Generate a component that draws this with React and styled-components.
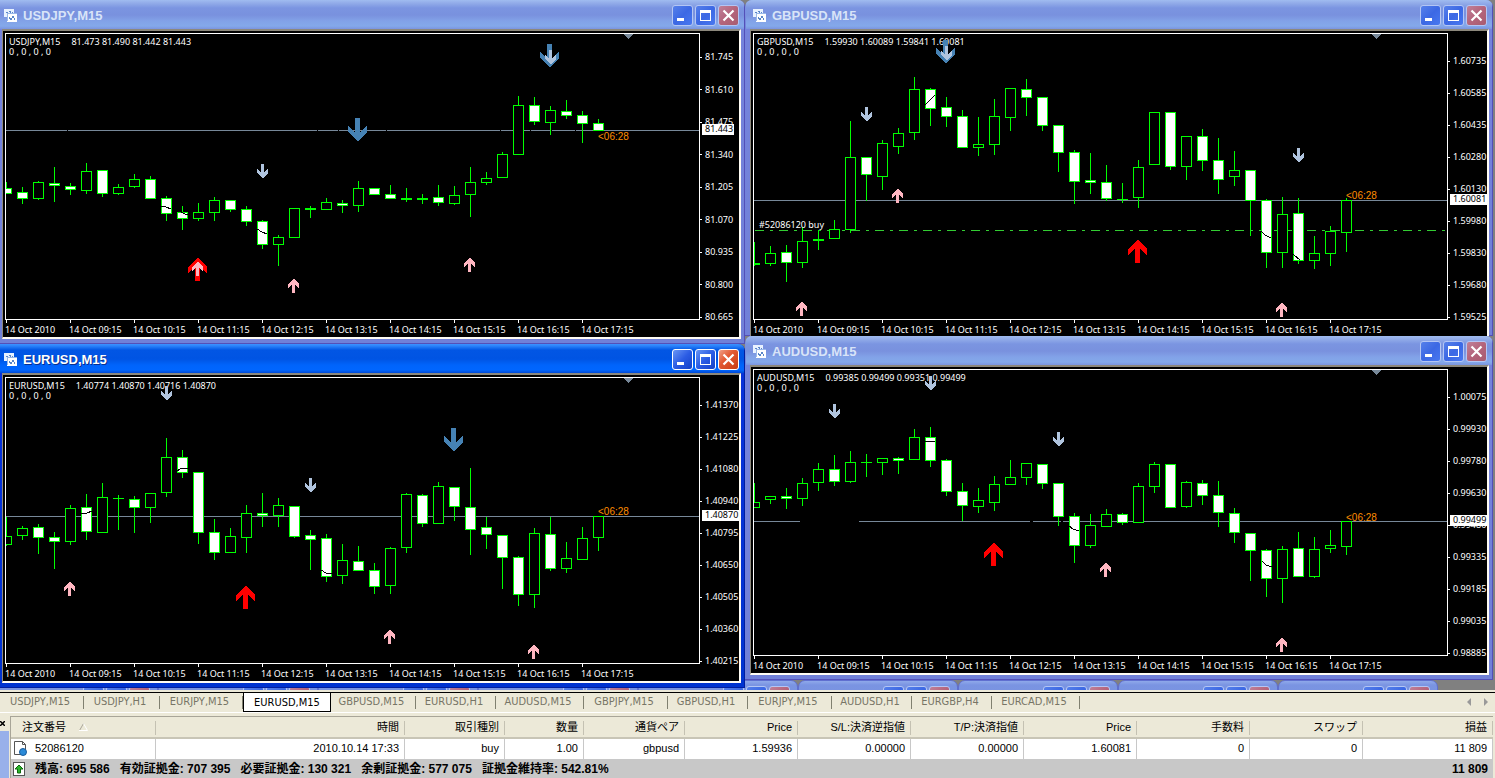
import styled, { createGlobalStyle } from 'styled-components'

const Global = createGlobalStyle`
*{box-sizing:border-box;}
body{
  margin:0;
  background:#ece9d8;
  font-family:"Liberation Sans","Noto Sans CJK JP",sans-serif;
  overflow-x:hidden;
}
button{font:inherit;padding:0;margin:0;}
`

const Desktop = styled.main`
background:#808080;
overflow:hidden;
border-bottom:2px solid #ece9d8;
`
const Windows = styled.div`
position:relative;
z-index:1;
display:grid;
grid-template-columns:minmax(0,745fr) minmax(0,750fr);
align-items:start;
`
const Column = styled.div`
display:flex;
flex-direction:column;
padding-right:${p => p.$right ? '2px' : '0'};
`
const Frame = styled.section`
background:${p => p.$active ? 'linear-gradient(#1a5be6,#0831d9 30px,#0033d0)' : 'linear-gradient(#7d97e2,#7583dc 30px,#7080d8)'};
padding:0 4px ${p => p.$covered ? '0' : '5px'} ${p => p.$right ? '5px' : '2px'};
border-radius:${p => p.$right ? '7px' : '0'} 7px 0 0;
overflow:hidden;
box-shadow:inset -1px -1px 0 ${p => p.$active ? '#001ea0' : '#5350b8'};
`
const TitleBar = styled.header`
height:29px;
margin:0 -3px 0 ${p => p.$right ? '-4px' : '-2px'};
padding:2px 5px 0 ${p => p.$right ? '7px' : '4px'};
display:flex;
align-items:center;
gap:2px;
background:${p => p.$active
    ? 'linear-gradient(#3d92ff 0,#2a82fa 2px,#0256e4 6px,#0054e3 15px,#0064fb 21px,#0066ff 26px,#0048d4 29px)'
    : 'linear-gradient(#a0bcf0 0,#92ace9 3px,#7b95e1 8px,#7991de 15px,#82a2e8 21px,#84a9ea 26px,#7b94e0 29px)'};

h2{
  flex:1;
  margin:0 0 0 3px;
  font-size:13px;
  line-height:18px;
  color:${p => p.$active ? '#ffffff' : '#d8e4f8'};
  text-shadow:${p => p.$active ? '1px 1px 0 #0a2f8c' : 'none'};
}
`
const CaptionButton = styled.button`
width:21px;
height:21px;
flex:none;
display:flex;
border:1px solid ${p => p.$active ? '#ffffff' : '#b4c6f4'};
border-radius:3px;
background:${p => p.$close
    ? (p.$active ? 'linear-gradient(135deg,#f0a088,#e35a34 40%,#c83c14)' : 'linear-gradient(135deg,#c08098,#b4647c 50%,#a85c70)')
    : (p.$active ? 'linear-gradient(135deg,#6a96f4,#2b5ce4 50%,#1440c8)' : 'linear-gradient(135deg,#5680ea,#3c68e4 50%,#4878f0)')};
`
const Client = styled.div`
background:#000;
color:#fff;
padding:2px 0 0 2px;
border-top:2px solid #8c887c;
border-left:1px solid #8c887c;
border-right:2px solid #fffcf4;
border-bottom:${p => p.$covered ? '0' : '2px solid #fffcf4'};
font-family:"Noto Sans","Liberation Sans",sans-serif;
font-size:9px;
line-height:10px;
`
const ChartBody = styled.div`
display:grid;
grid-template-columns:minmax(0,1fr) 39px;
`
const Plot = styled.div`
display:grid;
height:287px;
border:1px solid #fff;

svg{
  grid-area:1/1;
  width:100%;
  height:285px;
}
`
const Legend = styled.p`
grid-area:1/1;
margin:0;
padding:3px;
white-space:pre;

span{margin-right:11px;}
`
const PriceScale = styled.div`
position:relative;
height:287px;
`
const PriceAxis = styled.ol`
list-style:none;
margin:0;
padding:${p => p.$top}px 0 0;
height:289px;
display:flex;
flex-direction:column;
justify-content:space-between;

li{
  display:flex;
  align-items:center;
  gap:3px;
}
li::before{
  content:'';
  width:2px;
  height:1px;
  background:#fff;
}
`
// sits over the scale at the last price
const LastPrice = styled.output`
position:absolute;
left:2px;
top:${p => p.$y}px;
padding:0 1px 0 3px;
height:11px;
background:#fff;
color:#000;
`
const TimeAxis = styled.ol`
list-style:none;
margin:0;
padding:0;
height:${p => p.$covered ? '16px' : '17px'};
display:flex;
overflow:hidden;

li{
  flex:none;
  width:64px;
  white-space:nowrap;
}
li::before{
  content:'';
  display:block;
  width:1px;
  height:3px;
  margin:0 0 2px 1px;
  background:#fff;
}
`
const Dock = styled.div`
display:flex;
height:10px;
margin:-8px 0 0 -2px;
`
const Minimized = styled.div`
flex:none;
width:160px;
height:30px;
padding:5px 7px 0;
display:flex;
justify-content:flex-end;
gap:2px;
border-radius:7px 7px 0 0;
border:1px solid #5f6fd0;
background:linear-gradient(#8fa9ea 0,#7a94e2 4px,#7891de);
`
const TabBar = styled.nav`
display:flex;
height:21px;
border-top:1px solid #000;
border-bottom:1px solid #fff;
background:#ece9d8;
font-family:"DejaVu Sans Condensed","Noto Sans",sans-serif;
font-size:11px;
`
const Tab = styled.button`
flex:none;
width:${p => p.$w}px;
height:${p => p.$on ? '19px' : '17px'};
padding:${p => p.$on ? '0' : '0 4px 0 0'};
border:0;
background:${p => p.$on ? '#fff' : 'linear-gradient(#808070,#808070) right 3px / 1px 13px no-repeat'};
color:${p => p.$on ? '#000' : '#777566'};
box-shadow:${p => p.$on ? 'inset 1px -1px 0 #000,inset -1px 0 0 #000' : 'none'};
`
const Scrollers = styled.div`
margin-left:auto;
padding:5px 3px 0 0;
display:flex;
gap:4px;
`
const ScrollButton = styled.button`
width:13px;
height:9px;
border:0;
background:none;
display:flex;
justify-content:center;
`
const Terminal = styled.section`
display:flex;
padding:3px 2px 0 0;
font-size:11px;
color:#000;
`
const Side = styled.aside`
width:10px;
flex:none;
display:flex;
flex-direction:column;
border-right:1px solid #ece9d8;
background:#98b0ea;
`
const CloseTerminal = styled.button`
height:15px;
border:0;
background:#ece9d8;
padding-right:4px;
display:flex;
align-items:center;
`
const Orders = styled.table`
flex:1;
min-width:0;
table-layout:fixed;
border-collapse:separate;
border-spacing:0;
border-top:1px solid #a8a598;
border-left:1px solid #a8a598;

th,td{
  padding:0 5px;
  text-align:right;
  white-space:nowrap;
  overflow:hidden;
  line-height:16px;
}
th{
  height:22px;
  padding:0 6px;
  font-weight:normal;
  background:linear-gradient(#c4c1b2,#c4c1b2) right 4px / 1px 14px no-repeat,#ece9d8;
  border-bottom:2px solid #c8c5b6;
}
tbody td{
  height:20px;
  padding-bottom:3px;
  background:#fff;
  border-right:1px solid #c8c8c8;
}
tfoot td{
  height:19px;
  background:#c8c8c8;
  font-size:12px;
  font-weight:bold;
}
th:first-child,td:first-child{text-align:left;}
th:first-child{padding-left:11px;}
`
const IconLine = styled.div`
display:flex;
align-items:center;
gap:${p => p.$gap || 8}px;
margin-left:${p => p.$head ? '0' : '-3px'};

svg{flex:none;}
`
const Totals = styled.div`
display:flex;
gap:10px;
`

const GREEN = '#00ff00'
const TIMES = ['14 Oct 2010', '14 Oct 09:15', '14 Oct 10:15', '14 Oct 11:15', '14 Oct 12:15',
  '14 Oct 13:15', '14 Oct 14:15', '14 Oct 15:15', '14 Oct 16:15', '14 Oct 17:15']

// candle: [high, body top, body bottom, low, falling]
const CHARTS = {
  usdjpy: {
    symbol: 'USDJPY,M15',
    quote: '81.473 81.490 81.442 81.443',
    last: '81.443',
    line: 97,
    timerY: 107,
    axisTop: 21,
    prices: ['81.745', '81.610', '81.475', '81.340', '81.205', '81.070', '80.935', '80.800', '80.665'],
    gaps: [[62, 1], [312, 1], [333, 1], [381, 1], [495, 1], [525, 1], [546, 1], [570, 1]],
    average: ['M156 173l5 1 5 2', 'M176 179l4 2h4', 'M252 196l5 3 5 2'],
    arrows: [['light', 257, 131], ['steel', 352, 85], ['red', 192, 225], ['pink', 192, 229],
      ['pink', 288, 246], ['pink', 464, 225], ['steel', 544, 11], ['light', 545, 17]],
    candles: [
      [149, 155, 160, 160, 1], [154, 159, 165, 170, 1], [148, 149, 165, 166, 0], [134, 150, 152, 168, 1],
      [150, 153, 156, 161, 1], [130, 138, 157, 160, 0], [137, 137, 160, 163, 1], [151, 154, 160, 161, 0],
      [141, 146, 153, 154, 0], [143, 146, 165, 165, 1], [163, 165, 180, 187, 1], [173, 179, 185, 196, 1],
      [170, 179, 185, 187, 0], [164, 167, 179, 187, 0], [167, 167, 176, 178, 1], [173, 176, 188, 192, 1],
      [187, 188, 211, 215, 1], [202, 204, 211, 232, 0], [175, 175, 204, 204, 0], [173, 175, 176, 184, 0],
      [165, 169, 176, 176, 0], [167, 170, 172, 179, 1], [148, 155, 172, 178, 0], [155, 155, 161, 161, 1],
      [152, 161, 165, 165, 1], [155, 165, 166, 168, 0], [161, 165, 166, 170, 0], [152, 164, 169, 172, 1],
      [153, 162, 170, 171, 0], [134, 149, 161, 183, 0], [139, 145, 149, 151, 0], [119, 121, 144, 144, 0],
      [63, 72, 121, 121, 0], [64, 72, 88, 91, 1], [73, 77, 89, 101, 0], [67, 78, 82, 85, 1],
      [78, 82, 90, 109, 1], [86, 90, 97, 97, 1],
    ],
  },
  eurusd: {
    symbol: 'EURUSD,M15',
    quote: '1.40774 1.40870 1.40716 1.40870',
    last: '1.40870',
    line: 139,
    timerY: 138,
    axisTop: 25,
    prices: ['1.41370', '1.41225', '1.41080', '1.40940', '1.40795', '1.40650', '1.40505', '1.40360', '1.40215'],
    gaps: [],
    average: ['M76 136h6l5-2', 'M172 94l5-3h6', 'M316 193l5 3 6 1'],
    arrows: [['light', 161, 9], ['light', 305, 101], ['pink', 64, 205], ['red', 240, 209],
      ['steel', 448, 51], ['pink', 384, 253], ['pink', 528, 268]],
    candles: [
      [140, 159, 167, 168, 0], [149, 151, 158, 162, 0], [147, 150, 160, 176, 1], [155, 160, 164, 191, 1],
      [128, 131, 164, 167, 0], [117, 130, 154, 162, 1], [106, 120, 155, 155, 0], [118, 121, 121, 152, 0],
      [119, 122, 130, 155, 1], [116, 116, 130, 145, 0], [61, 80, 115, 119, 0], [73, 80, 95, 100, 1],
      [95, 95, 155, 166, 1], [142, 155, 175, 182, 1], [151, 159, 175, 175, 0], [128, 136, 160, 175, 0],
      [116, 136, 138, 149, 1], [121, 128, 138, 149, 0], [129, 129, 159, 160, 1], [153, 158, 162, 192, 1],
      [157, 161, 199, 204, 1], [167, 183, 198, 206, 0], [169, 184, 193, 193, 1], [186, 193, 209, 216, 1],
      [170, 171, 208, 216, 0], [116, 117, 170, 175, 0], [117, 118, 146, 149, 1], [105, 109, 146, 146, 0],
      [110, 110, 129, 143, 1], [91, 130, 152, 177, 1], [140, 150, 157, 171, 1], [158, 158, 180, 211, 1],
      [179, 180, 217, 228, 1], [151, 156, 217, 230, 0], [140, 157, 191, 193, 1], [165, 181, 191, 195, 0],
      [150, 161, 182, 182, 0], [139, 139, 160, 173, 0],
    ],
  },
  gbpusd: {
    symbol: 'GBPUSD,M15',
    quote: '1.59930 1.60089 1.59841 1.60081',
    last: '1.60081',
    line: 167,
    order: { y: 197, label: '#52086120 buy' },
    timerY: 166,
    axisTop: 25,
    prices: ['1.60735', '1.60585', '1.60435', '1.60280', '1.60130', '1.59980', '1.59830', '1.59680', '1.59525'],
    gaps: [],
    average: ['M172 72l10-10', 'M508 198l4 4 6 3', 'M540 221l7 6'],
    arrows: [['steel', 192, 7], ['light', 193, 13], ['light', 113, 74], ['pink', 144, 156],
      ['pink', 48, 269], ['red', 384, 207], ['light', 545, 115], ['pink', 528, 270]],
    candles: [
      [209, 230, 231, 232, 0], [213, 220, 230, 232, 0], [212, 219, 229, 248, 1], [194, 208, 229, 234, 0],
      [197, 206, 207, 216, 0], [187, 196, 205, 205, 0], [88, 124, 196, 199, 0], [124, 124, 141, 167, 1],
      [107, 110, 143, 156, 0], [95, 100, 113, 120, 0], [44, 56, 99, 106, 0], [55, 56, 75, 92, 1],
      [64, 74, 83, 93, 1], [77, 83, 114, 114, 1], [84, 111, 114, 122, 0], [66, 83, 111, 121, 0],
      [55, 55, 84, 97, 0], [46, 56, 64, 82, 1], [64, 64, 92, 97, 1], [92, 92, 119, 138, 1],
      [117, 119, 148, 170, 1], [120, 147, 149, 160, 1], [132, 149, 165, 167, 1], [150, 166, 166, 169, 0],
      [127, 134, 164, 174, 0], [79, 79, 131, 131, 0], [79, 79, 133, 136, 1], [103, 103, 133, 146, 0],
      [96, 103, 127, 137, 1], [105, 127, 146, 160, 1], [118, 137, 143, 152, 0], [137, 137, 167, 202, 1],
      [166, 167, 219, 234, 1], [164, 181, 219, 234, 0], [165, 180, 227, 230, 1], [203, 220, 227, 235, 0],
      [193, 198, 220, 232, 0], [165, 167, 199, 218, 0],
    ],
  },
  audusd: {
    symbol: 'AUDUSD,M15',
    quote: '0.99385 0.99499 0.99351 0.99499',
    last: '0.99499',
    line: 152,
    timerY: 152,
    axisTop: 25,
    prices: ['1.00075', '0.99930', '0.99780', '0.99630', '0.99480', '0.99335', '0.99185', '0.99035', '0.98885'],
    gaps: [[47, 59], [277, 3], [308, 2]],
    average: ['M172 72h10', 'M316 157l4 3 6 2', 'M509 192l4 4 6 2'],
    arrows: [['light', 81, 35], ['light', 177, 7], ['light', 305, 63], ['red', 240, 174],
      ['pink', 352, 194], ['pink', 528, 269]],
    candles: [
      [114, 133, 138, 138, 0], [127, 127, 130, 134, 0], [119, 127, 129, 139, 1], [109, 114, 129, 136, 0],
      [94, 100, 113, 121, 0], [86, 100, 112, 116, 1], [82, 93, 112, 113, 0], [85, 93, 93, 107, 0],
      [89, 89, 93, 105, 0], [88, 89, 91, 104, 1], [60, 68, 90, 90, 0], [58, 68, 91, 97, 1],
      [90, 91, 122, 126, 1], [114, 122, 136, 151, 1], [119, 131, 137, 143, 0], [107, 115, 133, 141, 0],
      [91, 108, 115, 115, 0], [94, 94, 108, 115, 0], [95, 95, 114, 119, 1], [114, 114, 147, 156, 1],
      [144, 147, 176, 193, 1], [145, 156, 176, 178, 0], [140, 145, 157, 157, 0], [144, 145, 153, 155, 1],
      [114, 117, 153, 153, 0], [93, 95, 117, 123, 0], [95, 95, 138, 138, 1], [112, 113, 137, 138, 0],
      [111, 114, 126, 135, 1], [112, 126, 143, 157, 1], [139, 144, 163, 173, 1], [164, 164, 181, 211, 1],
      [180, 181, 209, 227, 1], [177, 180, 209, 233, 0], [163, 179, 207, 207, 1], [168, 180, 207, 208, 0],
      [161, 176, 179, 183, 0], [152, 152, 177, 185, 0],
    ],
  },
}

const BIG_DOWN = 'M-2 0h5v14l7-6v6L.5 23.5-9 14V8l7 6z'
const BIG_UP = 'M-2 23h5V9l7 6V9L.5-.5-9 9v6l7-6z'
const SMALL_DOWN = 'M-1 0h3v8l4-3v4L.5 14.5-5 9V5l4 3z'
const SMALL_UP = 'M-1 14h3V6l4 3V5L.5-.5-5 5v4l4-3z'

const ARROWS = {
  steel: { d: BIG_DOWN, fill: '#4682b4' },
  red: { d: BIG_UP, fill: '#ff0000' },
  light: { d: SMALL_DOWN, fill: '#b0c4de' },
  pink: { d: SMALL_UP, fill: '#ffb6c1' },
}

function Candle({ x, data }) {
  const [high, top, bottom, low, falling] = data
  return (
    <g>
      <rect x={x} y={high} width="1" height={low - high + 1} fill={GREEN} />
      <rect x={x - 5} y={top} width="11" height={bottom - top + 1} fill={GREEN} />
      {bottom - top > 1 &&
        <rect x={x - 4} y={top + 1} width="9" height={bottom - top - 1} fill={falling ? '#fff' : '#000'} />}
    </g>
  )
}

function ChartIcon() {
  return (
    <svg width="14" height="13" shapeRendering="crispEdges" aria-hidden="true">
      <path d="M0 0h10v8H0z" fill="#e8f2ff" />
      <path d="M2 3h1v1M5 2h1v2M8 3h1" stroke="#5a86c8" fill="none" />
      <path d="M3 4h10v9H3z" fill="#fff" />
      <path d="M3 4.500h10M3.500 4v8" stroke="#9ab8e8" />
      <path d="M5 8l2 3 2-4 2 4" stroke="#5a86c8" fill="none" />
    </svg>
  )
}

function Caption({ active }) {
  return (
    <>
      <CaptionButton $active={active} aria-label="最小化">
        <svg width="19" height="19"><path d="M4 12h7v3H4z" fill="#fff" /></svg>
      </CaptionButton>
      <CaptionButton $active={active} aria-label="最大化">
        <svg width="19" height="19" shapeRendering="crispEdges"><path d="M4 4h11v11H4zM5 7v7h9V7z" fill="#fff" fillRule="evenodd" /></svg>
      </CaptionButton>
      <CaptionButton $active={active} $close aria-label="閉じる">
        <svg width="19" height="19"><path d="M4.500 4.500l10 10M14.500 4.500l-10 10" stroke="#fff" strokeWidth="2.200" /></svg>
      </CaptionButton>
    </>
  )
}

function ChartWindow({ chart, active, right, covered }) {
  return (
    <Frame $active={active} $right={right} $covered={covered}>
      <TitleBar $active={active} $right={right}>
        <ChartIcon />
        <h2>{chart.symbol}</h2>
        <Caption active={active} />
      </TitleBar>
      <Client $covered={covered}>
        <ChartBody>
          <Plot>
            <Legend><span>{chart.symbol}</span>{chart.quote}{'\n0 , 0 , 0 , 0'}</Legend>
            <svg shapeRendering="crispEdges">
              <g transform="translate(-1 -1)">
                <rect x="1" y={chart.line} width="100%" height="1" fill="#778899" />
                {chart.gaps.map(([x, w]) => <rect key={x} x={x} y={chart.line} width={w} height="1" fill="#000" />)}
                {chart.order &&
                  <path d={`M2 ${chart.order.y}.5h692`} stroke="#32cd32" strokeDasharray="9 6 3 6" />}
                {chart.candles.map((c, i) => <Candle key={i} x={1 + i * 16} data={c} />)}
                {chart.average.map((d) => <path key={d} d={d} stroke="#000" fill="none" />)}
                {chart.order && <text x="6" y={chart.order.y - 2} fill="#fff">{chart.order.label}</text>}
                {chart.arrows.map(([kind, x, y]) => (
                  <path key={kind + x} d={ARROWS[kind].d} fill={ARROWS[kind].fill} transform={`translate(${x} ${y})`} />
                ))}
                <path d="M619 1h9l-4.500 5z" fill="#778899" />
                <text x="593" y={chart.timerY} fill="#ff8c00" fontSize="10" fontFamily="Liberation Sans">{'<06:28'}</text>
              </g>
            </svg>
          </Plot>
          <PriceScale>
            <PriceAxis $top={chart.axisTop - 2}>
              {chart.prices.map((p) => <li key={p}>{p}</li>)}
            </PriceAxis>
            <LastPrice $y={chart.line - 6}>{chart.last}</LastPrice>
          </PriceScale>
        </ChartBody>
        <TimeAxis $covered={covered}>
          {TIMES.map((t) => <li key={t}>{t}</li>)}
        </TimeAxis>
      </Client>
    </Frame>
  )
}

const TABS = [
  ['USDJPY,M15', 84], ['USDJPY,H1', 76], ['EURJPY,M15', 83], ['EURUSD,M15', 88], ['GBPUSD,M15', 85],
  ['EURUSD,H1', 80], ['AUDUSD,M15', 88], ['GBPJPY,M15', 84], ['GBPUSD,H1', 80], ['EURJPY,M15', 84],
  ['AUDUSD,H1', 80], ['EURGBP,H4', 80], ['EURCAD,M15', 88],
]

const COLUMNS = [
  ['注文番号', 145, '52086120'], ['時間', 249, '2010.10.14 17:33'], ['取引種別', 100, 'buy'], ['数量', 79, '1.00'],
  ['通貨ペア', 101, 'gbpusd'], ['Price', 113, '1.59936'], ['S/L:決済逆指値', 113, '0.00000'],
  ['T/P:決済指値', 113, '0.00000'], ['Price', 113, '1.60081'], ['手数料', 113, '0'], ['スワップ', 113, '0'],
  ['損益', 130, '11 809'],
]

const TOTALS = ['残高: 695 586', '有効証拠金: 707 395', '必要証拠金: 130 321', '余剰証拠金: 577 075', '証拠金維持率: 542.81%']

function OrderIcon() {
  return (
    <svg width="14" height="16" aria-hidden="true">
      <path d="M1.500 1.500h8l3 3v10h-11z" fill="#fff" stroke="#555" />
      <path d="M9.500 1.500v3h3" fill="none" stroke="#555" />
      <circle cx="10" cy="12" r="3.500" fill="#2a8ad8" stroke="#1a5c9c" />
    </svg>
  )
}

function BalanceIcon() {
  return (
    <svg width="12" height="14" aria-hidden="true">
      <rect x=".5" y=".5" width="11" height="13" fill="#fff" stroke="#555" />
      <path d="M6 3l4 4H7.500v4h-3V7H2z" fill="#2cb52c" stroke="#0c6a0c" />
    </svg>
  )
}

function SortMark() {
  return (
    <svg width="9" height="8" aria-hidden="true">
      <path d="M.5 7.500L4.500.5" stroke="#a8a598" />
      <path d="M4.500.5l4 7H0" stroke="#fff" fill="none" />
    </svg>
  )
}

function App() {
  return (
    <>
      <Global />
      <Desktop>
        <Windows>
          <Column>
            <ChartWindow chart={CHARTS.usdjpy} />
            <ChartWindow chart={CHARTS.eurusd} active />
          </Column>
          <Column $right>
            <ChartWindow chart={CHARTS.gbpusd} right covered />
            <ChartWindow chart={CHARTS.audusd} right />
          </Column>
        </Windows>
        <Dock>
          {[1, 2, 3, 4, 5, 6, 7, 8, 9].map((n) => <Minimized key={n}><Caption /></Minimized>)}
        </Dock>
      </Desktop>
      <TabBar>
        {TABS.map(([name, w], i) => <Tab key={i} $w={w} $on={name === 'EURUSD,M15'}>{name}</Tab>)}
        <Scrollers>
          <ScrollButton aria-label="前へ"><svg width="4" height="8"><path d="M4 0v8L0 4z" fill="#999" /></svg></ScrollButton>
          <ScrollButton aria-label="次へ"><svg width="4" height="8"><path d="M0 0v8l4-4z" fill="#999" /></svg></ScrollButton>
        </Scrollers>
      </TabBar>
      <Terminal>
        <Side>
          <CloseTerminal aria-label="閉じる">
            <svg width="5" height="5"><path d="M0 0l5 5M5 0L0 5" stroke="#000" strokeWidth="1.500" /></svg>
          </CloseTerminal>
        </Side>
        <Orders>
          <colgroup>{COLUMNS.map(([, w], i) => <col key={i} width={w} />)}</colgroup>
          <thead>
            <tr>
              {COLUMNS.map(([title], i) => (
                <th key={i} scope="col">
                  {i ? title : <IconLine $head $gap={13}>{title}<SortMark /></IconLine>}
                </th>
              ))}
            </tr>
          </thead>
          <tbody>
            <tr>
              {COLUMNS.map(([, , value], i) => (
                <td key={i}>{i ? value : <IconLine><OrderIcon />{value}</IconLine>}</td>
              ))}
            </tr>
          </tbody>
          <tfoot>
            <tr>
              <td colSpan="11">
                <IconLine $gap={10}><BalanceIcon /><Totals>{TOTALS.map((t) => <span key={t}>{t}</span>)}</Totals></IconLine>
              </td>
              <td>11 809</td>
            </tr>
          </tfoot>
        </Orders>
      </Terminal>
    </>
  )
}

export default App
